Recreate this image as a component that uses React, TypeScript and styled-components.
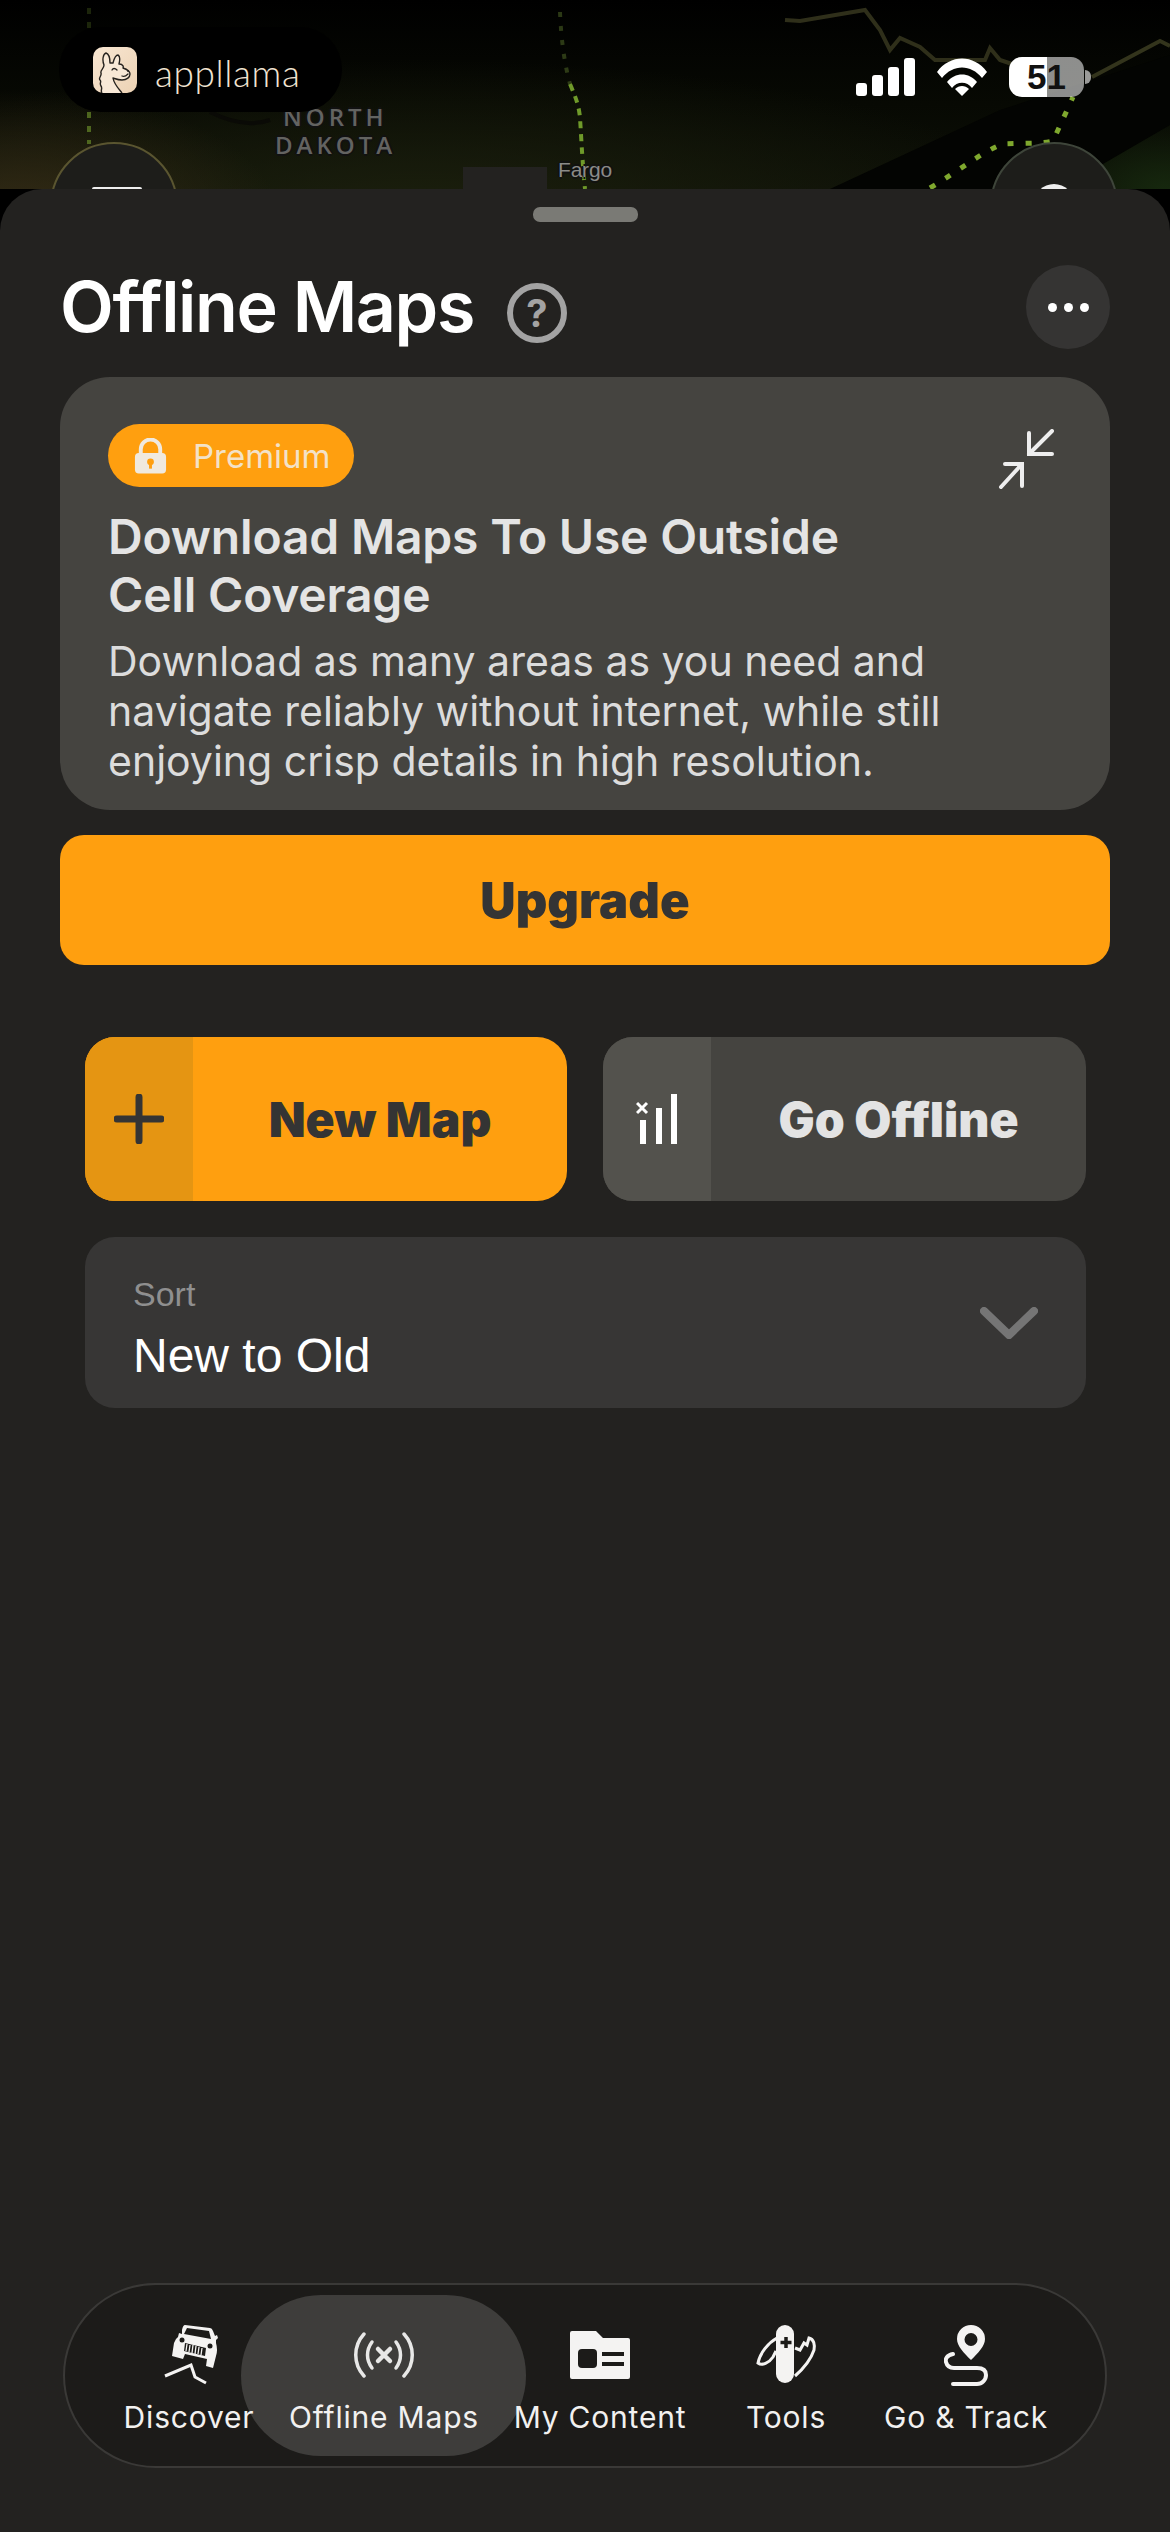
import { createGlobalStyle } from "styled-components";
import styled from "styled-components";

const GlobalStyle = createGlobalStyle`
  html, body {
    margin: 0;
    padding: 0;
    background: #232220;
  }
  * {
    box-sizing: border-box;
  }
`;

const Page = styled.div`
  width: 1170px;
  height: 2532px;
  display: flex;
  flex-direction: column;
  overflow: hidden;
  background: #000;
  font-family: Inter, "Liberation Sans", sans-serif;
`;

const MapHeader = styled.div`
  position: relative;
  height: 189px;
  flex: none;
  background:
    radial-gradient(ellipse 260px 130px at 20px 220px, #352c16 0%, rgba(53, 44, 22, 0) 100%),
    radial-gradient(ellipse 620px 150px at 420px 210px, #1b1f0d 0%, rgba(27, 31, 13, 0) 100%),
    radial-gradient(ellipse 120px 70px at 1165px 190px, #16280e 0%, rgba(22, 40, 14, 0) 100%),
    linear-gradient(180deg, #000 0%, #070903 55%, #0d1007 100%);
`;

const MapLines = styled.svg`
  position: absolute;
  inset: 0;
`;

const MapLabel = styled.div<{ $x: number; $y: number; $size: number }>`
  position: absolute;
  left: ${(p) => p.$x}px;
  top: ${(p) => p.$y}px;
  font-family: "Open Sans", "Liberation Sans", sans-serif;
  font-weight: 600;
  font-size: ${(p) => p.$size}px;
  line-height: 1;
  color: #636361;
  letter-spacing: 4px;
  text-shadow: -2px 0 #111, 2px 0 #111, 0 -2px #111, 0 2px #111;
`;

const FargoLabel = styled(MapLabel)`
  color: #8b8b88;
  font-family: "Liberation Sans", sans-serif;
  font-weight: 400;
  letter-spacing: -0.2px;
`;

const MapButton = styled.div<{ $x: number; $ring: string }>`
  position: absolute;
  left: ${(p) => p.$x}px;
  top: 142px;
  width: 128px;
  height: 128px;
  border-radius: 50%;
  background: #1d1d1a;
  border: 2px solid ${(p) => p.$ring};
`;

const MenuBar = styled.div`
  position: absolute;
  left: 40px;
  top: 43px;
  width: 50px;
  height: 6px;
  border-radius: 2px;
  background: #eee;
`;

const SearchDot = styled.div`
  position: absolute;
  left: 42px;
  top: 40px;
  width: 40px;
  height: 40px;
  border-radius: 50%;
  background: #eee;
`;

const NotchSquare = styled.div`
  position: absolute;
  left: 463px;
  top: 167px;
  width: 84px;
  height: 22px;
  background: #232220;
`;

const BrandPill = styled.div`
  position: absolute;
  left: 59px;
  top: 27px;
  width: 283px;
  height: 85px;
  border-radius: 42px;
  background: #000;
  display: flex;
  align-items: center;
  padding-left: 34px;
  gap: 18px;
`;

const BrandName = styled.span`
  font-family: Lato, "Open Sans", sans-serif;
  font-weight: 300;
  font-size: 37px;
  letter-spacing: 0.6px;
  color: #f2e4d2;
  line-height: 1;
  margin-top: 6px;
`;

const StatusIcons = styled.div`
  position: absolute;
  left: 856px;
  top: 57px;
  display: flex;
  align-items: center;
  gap: 22px;
`;

const Battery = styled.div`
  position: relative;
  width: 75px;
  height: 40px;
  border-radius: 13px;
  background: linear-gradient(90deg, #fff 0 38px, rgba(255, 255, 255, 0.55) 38px);
  font-family: "Liberation Sans", sans-serif;
  font-weight: 700;
  font-size: 35px;
  line-height: 40px;
  text-align: center;
  color: #111;

  &::after {
    content: "";
    position: absolute;
    left: 76px;
    top: 13px;
    width: 6px;
    height: 14px;
    border-radius: 0 7px 7px 0;
    background: rgba(255, 255, 255, 0.6);
  }
`;

const Sheet = styled.div`
  position: relative;
  flex: 1;
  display: flex;
  flex-direction: column;
  background: #232220;
  border-radius: 42px 42px 0 0;
  padding: 18px 60px 64px;
`;

const Handle = styled.div`
  width: 105px;
  height: 15px;
  flex: none;
  align-self: center;
  border-radius: 7px;
  background: #7a7a75;
`;

const TitleRow = styled.div`
  display: flex;
  align-items: center;
  height: 84px;
  margin-top: 43px;
`;

const Title = styled.h1`
  margin: 0;
  font-size: 70px;
  font-weight: 600;
  letter-spacing: -1.4px;
  line-height: 84px;
  color: #fff;
`;

const HelpIcon = styled.div`
  width: 60px;
  height: 60px;
  margin-left: 33px;
  margin-top: 12px;
  border-radius: 50%;
  border: 6px solid #a3a3a3;
  color: #a3a3a3;
  font-size: 38px;
  font-weight: 700;
  line-height: 48px;
  text-align: center;
`;

const MoreButton = styled.div`
  width: 84px;
  height: 84px;
  margin-left: auto;
  border-radius: 50%;
  background: #353433;
  display: flex;
  align-items: center;
  justify-content: center;
  gap: 7px;
`;

const Dot = styled.span`
  width: 9px;
  height: 9px;
  border-radius: 50%;
  background: #fff;
`;

const PromoCard = styled.section`
  position: relative;
  margin-top: 28px;
  height: 433px;
  border-radius: 50px;
  background: #454440;
  padding: 47px 48px 0;
`;

const PremiumBadge = styled.div`
  width: 246px;
  height: 63px;
  border-radius: 32px;
  background: #ff9f0f;
  display: flex;
  align-items: center;
  gap: 25px;
  padding-left: 25px;
  font-size: 33px;
  color: #f3e2c8;
`;

const CollapseIcon = styled.svg`
  position: absolute;
  right: 56px;
  top: 52px;
`;

const PromoTitle = styled.h2`
  margin: 21px 0 0;
  font-size: 48px;
  font-weight: 600;
  letter-spacing: -0.2px;
  line-height: 58px;
  color: #e4e4e4;
`;

const PromoText = styled.p`
  margin: 12px 0 0;
  font-size: 41px;
  font-weight: 400;
  line-height: 50px;
  color: #dcdcdc;
`;

const UpgradeButton = styled.div`
  margin-top: 25px;
  height: 130px;
  border-radius: 24px;
  background: #ff9f0f;
  display: flex;
  align-items: center;
  justify-content: center;
  font-size: 49px;
  font-weight: 900;
  color: #343434;
`;

const Inset = styled.div`
  padding: 0 24px 0 25px;
`;

const ActionRow = styled(Inset)`
  margin-top: 72px;
  display: grid;
  grid-template-columns: 482px 483px;
  gap: 36px;
`;

const ActionButton = styled.div<{ $accent?: boolean }>`
  height: 164px;
  border-radius: 30px;
  overflow: hidden;
  display: flex;
  background: ${(p) => (p.$accent ? "#ff9f0f" : "#454440")};
  color: ${(p) => (p.$accent ? "#343434" : "#e3e3e3")};
`;

const ActionIcon = styled.div<{ $accent?: boolean }>`
  width: 108px;
  flex: none;
  display: flex;
  align-items: center;
  justify-content: center;
  background: ${(p) => (p.$accent ? "#e59512" : "#53524d")};
`;

const ActionLabel = styled.div`
  flex: 1;
  display: flex;
  align-items: center;
  justify-content: center;
  font-size: 48px;
  font-weight: 900;
`;

const SortWrap = styled(Inset)`
  margin-top: 36px;
`;

const SortBox = styled.div`
  height: 171px;
  border-radius: 30px;
  background: #373635;
  display: flex;
  align-items: center;
  justify-content: space-between;
  padding: 0 48px;
`;

const SortText = styled.div`
  padding-top: 12px;
`;

const SortLabel = styled.div`
  font-family: "Liberation Sans", sans-serif;
  font-size: 34px;
  line-height: 40px;
  color: #8f8f8f;
`;

const SortValue = styled.div`
  margin-top: 14px;
  font-family: "Liberation Sans", sans-serif;
  font-size: 48px;
  line-height: 56px;
  color: #fff;
`;

const TabBar = styled.nav`
  isolation: isolate;
  margin: auto 3px 0 3px;
  height: 185px;
  flex: none;
  border-radius: 93px;
  background: #1c1b19;
  border: 2px solid #3a3937;
  display: flex;
  padding-left: 29px;
`;

const Tab = styled.div<{ $w: number; $active?: boolean }>`
  position: relative;
  width: ${(p) => p.$w}px;
  flex: none;
  display: flex;
  flex-direction: column;
  align-items: center;

  ${(p) =>
    p.$active &&
    `
    &::before {
      content: "";
      position: absolute;
      left: 50%;
      top: 10px;
      width: 285px;
      height: 161px;
      margin-left: -143px;
      border-radius: 80px;
      background: #3e3d3b;
      z-index: 0;
    }
  `}
`;

const TabIcon = styled.div`
  position: relative;
  z-index: 1;
  height: 60px;
  margin-top: 40px;
  display: flex;
  align-items: center;
  justify-content: center;
`;

const TabLabel = styled.div`
  position: relative;
  z-index: 1;
  margin-top: 12px;
  font-size: 30px;
  line-height: 40px;
  letter-spacing: 0.8px;
  white-space: nowrap;
  color: #f2f1f0;
`;

function LlamaLogo() {
  return (
    <svg width="44" height="46" viewBox="0 0 44 46">
      <defs>
        <linearGradient id="llamaBg" x1="0" y1="0" x2="1" y2="1">
          <stop offset="0" stopColor="#f8e6d2" />
          <stop offset="1" stopColor="#ecd2b4" />
        </linearGradient>
      </defs>
      <rect width="44" height="46" rx="10" fill="url(#llamaBg)" />
      <path
        d="M9 46c-2-3 1-4-1-7s1-4-1-6 2-4 1-7 3-4 3-8c-2-5-1-11 2-12 3 1 4 5 4 10l3 0c1-4 3-8 5-8 2 1 2 5 1 9 3 0 5 2 4 4 3 1 7 3 7 6s-3 6-8 6c-4 0-6-1-9-2 1 6 5 10 9 15"
        fill="#f8e8d6"
        stroke="#26221e"
        strokeWidth="1.4"
        strokeLinejoin="round"
      />
      <path d="M19 23c1-2 3-2 5 0M29 29c2 1 4 0 6-2" fill="none" stroke="#26221e" strokeWidth="1.3" strokeLinecap="round" />
      <circle cx="35" cy="24" r="0.9" fill="#26221e" />
    </svg>
  );
}

function SignalIcon() {
  return (
    <svg width="59" height="38" viewBox="0 0 59 38" fill="#fff">
      <rect x="0" y="25" width="11" height="13" rx="3" />
      <rect x="16" y="17" width="11" height="21" rx="3" />
      <rect x="32" y="9" width="11" height="29" rx="3" />
      <rect x="48" y="0" width="11" height="38" rx="3" />
    </svg>
  );
}

function WifiIcon() {
  return (
    <svg width="50" height="38" viewBox="0 0 50 38" fill="#fff">
      <path d="M0 14C13 -4 37 -4 50 14l-5 6C34 6 16 6 5 20z" />
      <path d="M10 24c8-10 22-10 30 0l-5 6c-5-7-15-7-20 0z" />
      <path d="M18 31c4-4 10-4 14 0l-7 7z" />
    </svg>
  );
}

function LockIcon() {
  return (
    <svg width="35" height="36" viewBox="0 0 36 36">
      <path d="M8 17v-6a10 10 0 0 1 20 0v6" fill="none" stroke="#f0e9de" strokeWidth="4" />
      <rect x="2" y="15" width="32" height="21" rx="4" fill="#f0e9de" />
      <circle cx="18" cy="24" r="3.5" fill="#ff9f0f" />
      <rect x="16.5" y="25" width="3" height="6" fill="#ff9f0f" />
    </svg>
  );
}

function CollapseGlyph() {
  return (
    <CollapseIcon
      width="56"
      height="60"
      viewBox="0 0 56 60"
      fill="none"
      stroke="#eee"
      strokeWidth="4"
      strokeLinecap="round"
    >
      <path d="M54 2L31 25M31 4v21h23" />
      <path d="M3 58l21-23M7 35h17v22" />
    </CollapseIcon>
  );
}

function PlusIcon() {
  return (
    <svg width="50" height="50" viewBox="0 0 50 50" stroke="#343434" strokeWidth="7" strokeLinecap="round">
      <path d="M25 3v44M3 25h44" />
    </svg>
  );
}

function OfflineBarsIcon() {
  return (
    <svg width="42" height="50" viewBox="0 0 42 50" fill="#fff">
      <rect x="4" y="26" width="6" height="24" />
      <rect x="20" y="14" width="6" height="36" />
      <rect x="35" y="0" width="6" height="50" />
      <path d="M1 9l10 10M11 9L1 19" stroke="#fff" strokeWidth="3" />
    </svg>
  );
}

function JeepIcon() {
  return (
    <svg width="80" height="80" viewBox="-7 0 80 80">
      <path
        fill="#f4f3f2"
        fillRule="evenodd"
        d="M29 10L54 13Q56 13 57 16L59 21L61 20L62 23L60 25L60 28Q62 35 60 41L57 53L50 51L51 44L29 39L27 44L16 41L18 28L20 24L22 22L23 18L26 19L26 15Q27 10 29 10ZM31 13L28 19L55 24L53 16Z"
      />
      <path d="M29 28L50 33L49 41L28 36Z" fill="#1c1b19" />
      <path
        d="M31 29l-1 7M34 30l-1 7M37 30l-1 8M40 31l-1 8M43 32l-1 7M46 33l-1 7"
        stroke="#f4f3f2"
        strokeWidth="1.3"
      />
      <circle cx="26" cy="25" r="2.5" fill="#1c1b19" />
      <circle cx="54" cy="31" r="2.5" fill="#1c1b19" />
      <path d="M9 61L35 50L39 62L50 68" fill="none" stroke="#f4f3f2" strokeWidth="3" />
    </svg>
  );
}

function BroadcastIcon() {
  return (
    <svg width="62" height="46" viewBox="0 0 62 46" fill="none" stroke="#e8e8e7" strokeWidth="3.5" strokeLinecap="round">
      <path d="M11 2c-11 12-11 30 0 42M51 2c11 12 11 30 0 42" />
      <path d="M19 10c-6 8-6 18 0 26M43 10c6 8 6 18 0 26" />
      <path d="M25 17l12 12M37 17L25 29" strokeWidth="4.5" />
    </svg>
  );
}

function FolderIcon() {
  return (
    <svg width="60" height="48" viewBox="0 0 60 48">
      <path
        fill="#f4f3f2"
        d="M2 0h24l7 7h25a2 2 0 0 1 2 2v37a2 2 0 0 1-2 2H2a2 2 0 0 1-2-2V2a2 2 0 0 1 2-2z"
      />
      <rect x="8" y="18" width="19" height="19" rx="4" fill="#1c1b19" />
      <rect x="32" y="21" width="22" height="4" fill="#1c1b19" />
      <rect x="32" y="31" width="22" height="4" fill="#1c1b19" />
    </svg>
  );
}

function KnifeIcon() {
  return (
    <svg width="80" height="80" viewBox="0 0 80 80">
      <rect x="30" y="10" width="18" height="58" rx="9" fill="#f4f3f2" />
      <path d="M31 23C22 28 14 38 12 48C16 51 23 48 27 42L30 36" fill="none" stroke="#f4f3f2" strokeWidth="3" />
      <path d="M49 33L54 35L58 28L61 30L63 23C68 24 69 30 68 35C65 44 57 54 49 61" fill="none" stroke="#f4f3f2" strokeWidth="3" />
      <path d="M40 22v11M34.500 27.500h11" stroke="#1c1b19" strokeWidth="3.5" />
    </svg>
  );
}

function RouteIcon() {
  return (
    <svg width="44" height="62" viewBox="0 0 44 62">
      <path
        fillRule="evenodd"
        fill="#f4f3f2"
        d="M27 1a14 14 0 0 1 14 14c0 7-7 14-14 21C20 29 13 22 13 15A14 14 0 0 1 27 1zm0 8a6.5 6.5 0 1 0 0 13 6.5 6.5 0 0 0 0-13z"
      />
      <path
        d="M9 30C3 31 1 35 2 38c1 4 4 6 8 6h23c5 0 9 2 9 7s-4 9-9 9H9"
        fill="none"
        stroke="#f4f3f2"
        strokeWidth="4"
        strokeLinecap="round"
      />
    </svg>
  );
}

const tabs = [
  { label: "Discover", width: 190, icon: <JeepIcon /> },
  { label: "Offline Maps", width: 200, icon: <BroadcastIcon />, active: true },
  { label: "My Content", width: 232, icon: <FolderIcon /> },
  { label: "Tools", width: 140, icon: <KnifeIcon /> },
  { label: "Go & Track", width: 220, icon: <RouteIcon /> },
];

function App() {
  return (
    <Page>
      <GlobalStyle />
      <MapHeader>
        <MapLines width="1170" height="189" fill="none">
          <path d="M830 189L1000 110L1170 55V125L1060 189Z" fill="#030402" />
          <path d="M89 8v20" stroke="#5c7a24" strokeWidth="4" strokeDasharray="6 8" opacity="0.3" />
          <path d="M89 112v32" stroke="#5c7a24" strokeWidth="4" strokeDasharray="6 8" opacity="0.8" />
          <path d="M560 12c1 25 4 50 10 72" stroke="#55702a" strokeWidth="4" strokeDasharray="5 9" opacity="0.5" />
          <path d="M570 84c6 14 9 22 10 34 1 14 2 40 5 71" stroke="#6f9a2a" strokeWidth="4" strokeDasharray="7 6" />
          <path
            d="M785 20L800 21L865 10L880 30L890 50L900 38L920 47L935 60L985 60L990 48L1000 60L1012 64"
            stroke="#2f2f1a"
            strokeWidth="4"
          />
          <path d="M1092 77L1160 41L1170 46" stroke="#33341c" strokeWidth="4" />
          <path d="M930 188C960 170 985 150 1003 144C1020 143 1040 144 1053 141L1073 97" stroke="#7fa82e" strokeWidth="5" strokeDasharray="6 12" />
          <path d="M210 112c20 10 40 15 60 8" stroke="#0a0a06" strokeWidth="4" />
        </MapLines>
        <MapLabel $x={283} $y={105} $size={24}>
          NORTH
        </MapLabel>
        <MapLabel $x={275} $y={133} $size={24}>
          DAKOTA
        </MapLabel>
        <FargoLabel $x={558} $y={159} $size={21}>
          Fargo
        </FargoLabel>
        <MapButton $x={50} $ring="#5a5530">
          <MenuBar />
        </MapButton>
        <MapButton $x={990} $ring="#3e453a">
          <SearchDot />
        </MapButton>
        <NotchSquare />
        <BrandPill>
          <LlamaLogo />
          <BrandName>appllama</BrandName>
        </BrandPill>
        <StatusIcons>
          <SignalIcon />
          <WifiIcon />
          <Battery>51</Battery>
        </StatusIcons>
      </MapHeader>

      <Sheet>
        <Handle />
        <TitleRow>
          <Title>Offline Maps</Title>
          <HelpIcon>?</HelpIcon>
          <MoreButton>
            <Dot />
            <Dot />
            <Dot />
          </MoreButton>
        </TitleRow>

        <PromoCard>
          <PremiumBadge>
            <LockIcon />
            Premium
          </PremiumBadge>
          <CollapseGlyph />
          <PromoTitle>
            Download Maps To Use Outside
            <br />
            Cell Coverage
          </PromoTitle>
          <PromoText>
            Download as many areas as you need and
            <br />
            navigate reliably without internet, while still
            <br />
            enjoying crisp details in high resolution.
          </PromoText>
        </PromoCard>

        <UpgradeButton>Upgrade</UpgradeButton>

        <ActionRow>
          <ActionButton $accent>
            <ActionIcon $accent>
              <PlusIcon />
            </ActionIcon>
            <ActionLabel>New Map</ActionLabel>
          </ActionButton>
          <ActionButton>
            <ActionIcon>
              <OfflineBarsIcon />
            </ActionIcon>
            <ActionLabel>Go Offline</ActionLabel>
          </ActionButton>
        </ActionRow>

        <SortWrap>
          <SortBox>
            <SortText>
              <SortLabel>Sort</SortLabel>
              <SortValue>New to Old</SortValue>
            </SortText>
            <svg width="58" height="32" viewBox="0 0 58 32" fill="none" stroke="#757575" strokeWidth="8" strokeLinecap="round" strokeLinejoin="round">
              <path d="M4 4l25 24L54 4" />
            </svg>
          </SortBox>
        </SortWrap>

        <TabBar>
          {tabs.map((tab) => (
            <Tab key={tab.label} $w={tab.width} $active={tab.active}>
              <TabIcon>{tab.icon}</TabIcon>
              <TabLabel>{tab.label}</TabLabel>
            </Tab>
          ))}
        </TabBar>
      </Sheet>
    </Page>
  );
}

export default App;
